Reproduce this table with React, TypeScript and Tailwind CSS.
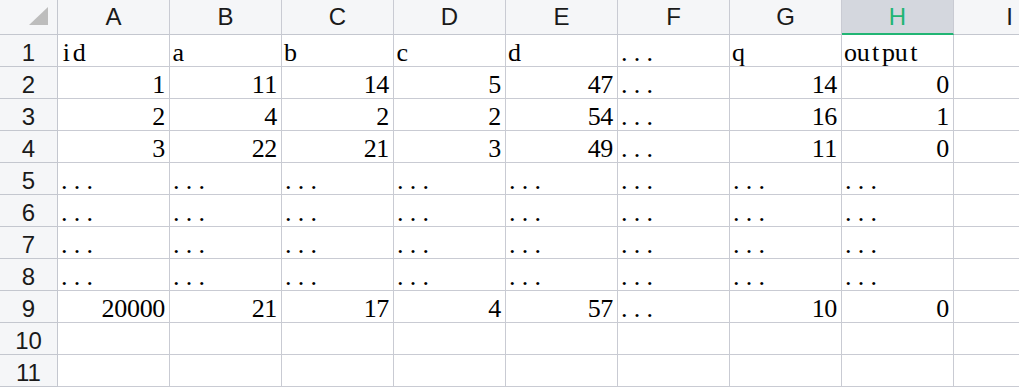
import React from 'react';

// Spreadsheet view: column letters on top, row numbers on the left, a block of sample data.
const COLS = ['A', 'B', 'C', 'D', 'E', 'F', 'G', 'H', 'I'];
const ACTIVE_COL = 'H';

type Cell = string | number | null;

const DOTS = '...';

const ROWS: Cell[][] = [
  ['id', 'a', 'b', 'c', 'd', DOTS, 'q', 'output'],
  [1, 11, 14, 5, 47, DOTS, 14, 0],
  [2, 4, 2, 2, 54, DOTS, 16, 1],
  [3, 22, 21, 3, 49, DOTS, 11, 0],
  [DOTS, DOTS, DOTS, DOTS, DOTS, DOTS, DOTS, DOTS],
  [DOTS, DOTS, DOTS, DOTS, DOTS, DOTS, DOTS, DOTS],
  [DOTS, DOTS, DOTS, DOTS, DOTS, DOTS, DOTS, DOTS],
  [DOTS, DOTS, DOTS, DOTS, DOTS, DOTS, DOTS, DOTS],
  [20000, 21, 17, 4, 57, DOTS, 10, 0],
  [],
  [],
];

// Half-width serif glyphs set on a fixed pitch, like the sheet's default font
const Pitched = ({ text }: { text: string }) => (
  <span className="inline-flex">
    {text.split('').map((ch, i) =>
      ch === '.' ? (
        <span key={i} className="inline-block w-[12.7px] pl-[1px] text-left">.</span>
      ) : (
        <span key={i} className="inline-block w-[12.7px] text-center">{ch}</span>
      )
    )}
  </span>
);

const DataCell = ({ value }: { value: Cell }) => {
  const numeric = typeof value === 'number';
  return (
    <div
      className={`flex h-[32px] w-[112px] shrink-0 items-end overflow-hidden whitespace-nowrap border-b border-r border-[#c9cbd3] pb-[1px] text-[26px] leading-[25px] text-black ${
        numeric ? 'justify-end pr-[4px]' : 'justify-start pl-[2px]'
      }`}
      style={{ fontFamily: '"Liberation Serif", "Times New Roman", serif' }}
    >
      {value !== null && value !== undefined && <Pitched text={String(value)} />}
    </div>
  );
};

const CornerCell = () => (
  <div className="relative h-[35px] w-[58px] shrink-0 border-b border-r border-[#c4c7cf] bg-[#f5f6f8]">
    <svg className="absolute left-0 top-0" width="58" height="34" viewBox="0 0 58 34">
      <polygon points="48,7 48,25 29,25" fill="#bdbdbd" />
    </svg>
  </div>
);

const ColHeader = ({ label }: { label: string }) => {
  const active = label === ACTIVE_COL;
  return (
    <div
      className={`flex h-[35px] w-[112px] shrink-0 items-center justify-center border-r border-[#c9cbd3] text-[24px] leading-[24px] ${
        active
          ? 'border-b-2 border-b-[#21b574] bg-[#d4d7de] pt-[1px] text-[#21b574]'
          : 'border-b border-b-[#c4c7cf] bg-[#f5f6f8] text-[#1a1a1a]'
      }`}
      style={{ fontFamily: '"Liberation Sans", Arial, sans-serif' }}
    >
      {label}
    </div>
  );
};

const RowHeader = ({ n }: { n: number }) => (
  <div
    className="flex h-[32px] w-[58px] shrink-0 items-end justify-center border-b border-r border-[#c4c7cf] bg-[#f5f6f8] pb-[1px] text-[24px] leading-[24px] text-[#1a1a1a]"
    style={{ fontFamily: '"Liberation Sans", Arial, sans-serif' }}
  >
    {n}
  </div>
);

export default function App() {
  return (
    <div className="h-[389px] w-[1019px] overflow-hidden bg-white">
      <div className="flex w-max">
        <CornerCell />
        {COLS.map((c) => (
          <ColHeader key={c} label={c} />
        ))}
      </div>
      {ROWS.map((row, r) => (
        <div key={r} className="flex w-max">
          <RowHeader n={r + 1} />
          {COLS.map((c, i) => (
            <DataCell key={c} value={row[i] ?? null} />
          ))}
        </div>
      ))}
    </div>
  );
}
